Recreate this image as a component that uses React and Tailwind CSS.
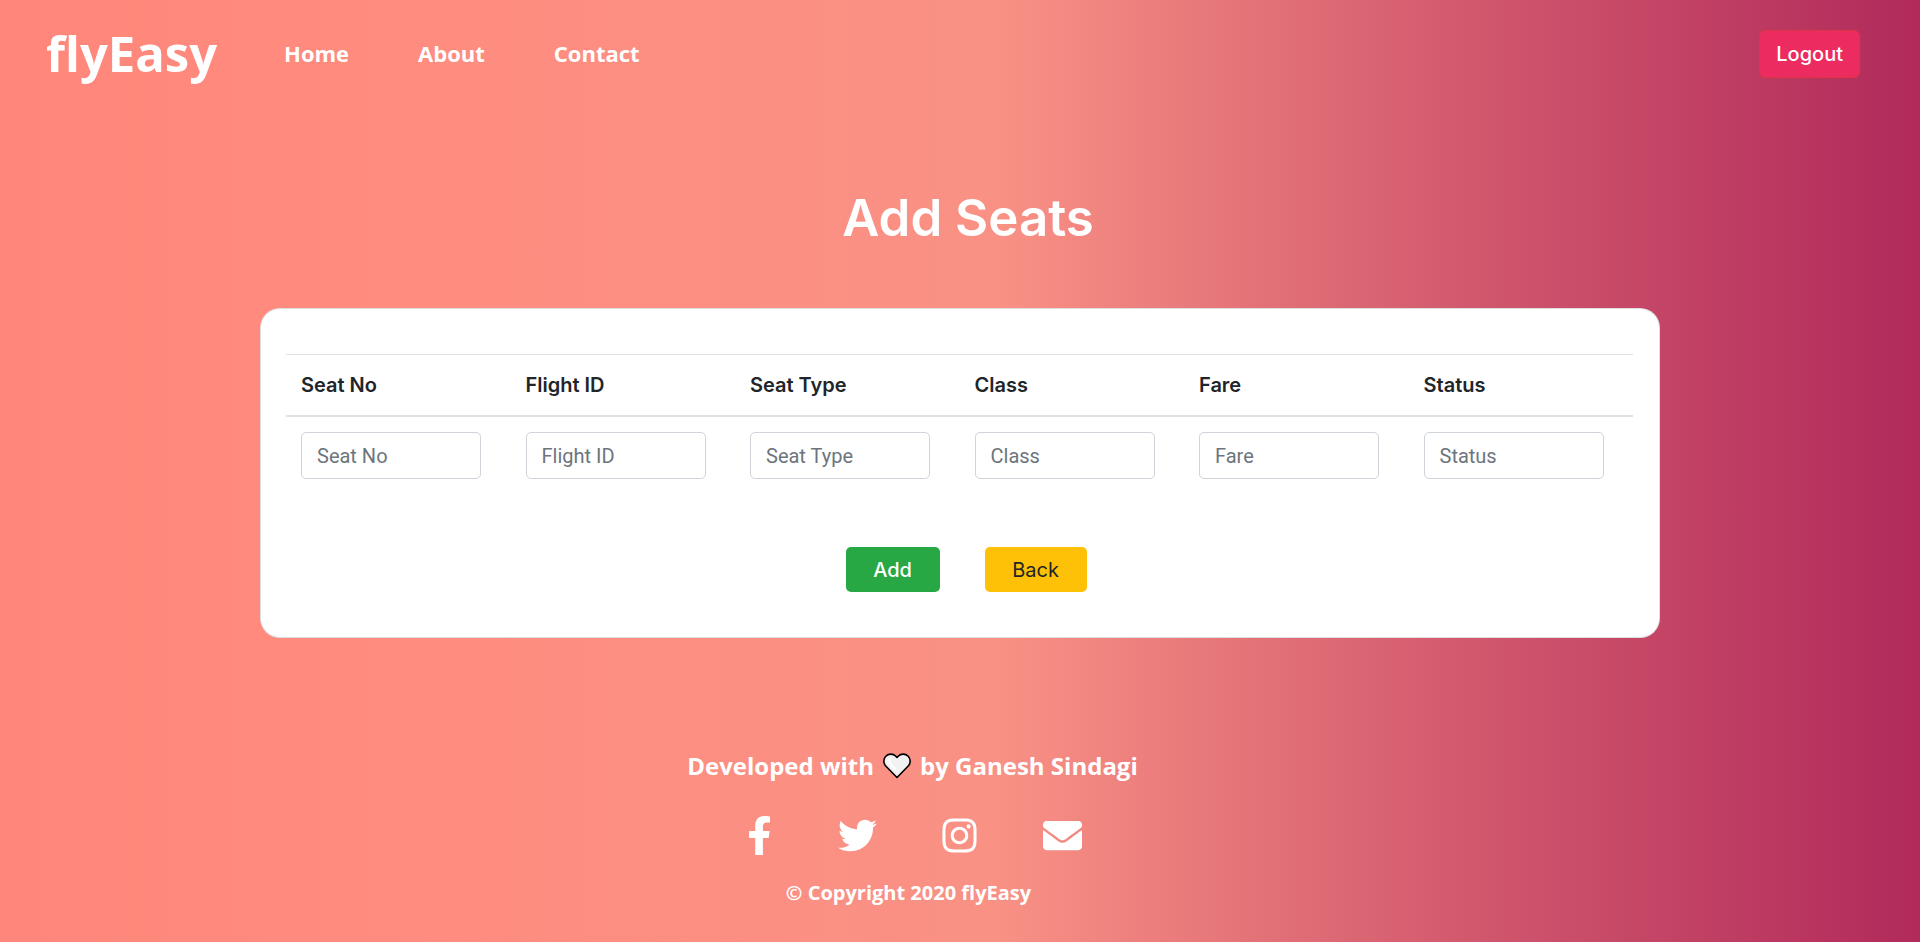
import { FaEnvelope, FaFacebookF, FaInstagram, FaTwitter } from "react-icons/fa";

const navLinks = ["Home", "About", "Contact"];

const fields = [
  { id: "seat-no", label: "Seat No" },
  { id: "flight-id", label: "Flight ID" },
  { id: "seat-type", label: "Seat Type" },
  { id: "class", label: "Class" },
  { id: "fare", label: "Fare" },
  { id: "status", label: "Status" },
];

const socials = [
  { name: "Facebook", Icon: FaFacebookF, width: "w-6" },
  { name: "Twitter", Icon: FaTwitter, width: "w-[39px]" },
  { name: "Instagram", Icon: FaInstagram, width: "w-[34px]" },
  { name: "Email", Icon: FaEnvelope, width: "w-[39px]" },
];

function Heart() {
  return (
    <svg viewBox="0 0 28 26" className="h-[26px] w-7" aria-hidden="true">
      <path
        d="M14 24.500 3 13.300C.2 10.400.1 6 2.800 3.200c2.800-2.800 7.300-2.800 10 0L14 4.400l1.200-1.200c2.700-2.800 7.200-2.800 10 0 2.700 2.800 2.600 7.200-.2 10.100Z"
        fill="#f2f2f2"
        stroke="#000"
        strokeWidth="1.600"
        strokeLinejoin="round"
      />
      <path d="M6.600 6.200c-.4 3.400 1.600 6.800 5.400 9.200" fill="none" stroke="#fff" strokeWidth="2.400" strokeLinecap="round" />
    </svg>
  );
}

function Header() {
  return (
    <header className="flex items-center py-6 pr-[60px] pl-[46px] font-['Open_Sans',sans-serif] font-bold text-white">
      <a href="#" className="pb-0.5 text-[49px] leading-[58px]">
        flyEasy
      </a>
      <nav className="ml-[67px] flex gap-[69px] pb-0.5 text-[22px] leading-8">
        {navLinks.map((link) => (
          <a key={link} href="#">
            {link}
          </a>
        ))}
      </nav>
      <button
        type="button"
        className="ml-auto h-12 rounded-md border border-[#dc3545] bg-[#ec2b61] px-4 font-['Inter',sans-serif] text-xl font-medium"
      >
        Logout
      </button>
    </header>
  );
}

function SeatForm() {
  return (
    <form
      className="mx-auto w-full max-w-[1400px] rounded-[20px] border border-black/[.125] bg-white pt-[45px] pr-[26px] pb-[45px] pl-[25px]"
      onSubmit={(event) => event.preventDefault()}
    >
      <table className="w-full table-fixed border-collapse text-left">
        <thead>
          <tr className="border-t border-b-2 border-t-[#dee2e6] border-b-[#dee2e6]">
            {fields.map(({ id, label }) => (
              <th key={id} scope="col" className="px-[15px] py-[15px] font-['Inter',sans-serif] text-xl leading-[30px] font-semibold text-[#212529]">
                <label htmlFor={id}>{label}</label>
              </th>
            ))}
          </tr>
        </thead>
        <tbody>
          <tr>
            {fields.map(({ id, label }) => (
              <td key={id} className="px-[15px] py-[15px]">
                <input
                  id={id}
                  type="text"
                  placeholder={label}
                  className="block h-[47px] w-full max-w-[180px] rounded-[5px] border border-[#ced4da] px-[15px] font-['Roboto',sans-serif] text-xl text-[#495057] placeholder:text-[#6c757d]"
                />
              </td>
            ))}
          </tr>
        </tbody>
      </table>
      <div className="mt-[53px] flex justify-center gap-[45px] pl-[13px] font-['Inter',sans-serif] text-xl">
        <button type="submit" className="h-[45px] w-[94px] rounded-[5px] bg-[#28a745] font-medium text-white">
          Add
        </button>
        <button type="button" className="h-[45px] w-[102px] rounded-[5px] bg-[#ffc107] text-[#212529]">
          Back
        </button>
      </div>
    </form>
  );
}

function Footer() {
  return (
    <footer className="mt-auto flex flex-col items-center pr-[95px] pb-[35px] font-['Open_Sans',sans-serif] font-bold text-white">
      <p className="flex items-center gap-[9px] text-2xl leading-9">
        Developed with <Heart /> by Ganesh Sindagi
      </p>
      <div className="mt-8 flex gap-[66px] pl-1">
        {socials.map(({ name, Icon, width }) => (
          <a key={name} href="#" aria-label={name} className={`flex justify-center ${width}`}>
            <Icon className="size-[39px] shrink-0" />
          </a>
        ))}
      </div>
      <p className="mt-6 pr-2 text-xl leading-7">© Copyright 2020 flyEasy</p>
    </footer>
  );
}

export default function App() {
  return (
    <div className="flex min-h-screen flex-col bg-[linear-gradient(to_right,#ff867a_0%,#ff8c7f_21%,#f99185_52%,#cf556c_78%,#b12a5b_100%)]">
      <Header />
      <main className="px-6 pt-[74px]">
        <h1 className="mb-[54px] pl-4 text-center font-['Inter',sans-serif] text-[51px] leading-[72px] font-semibold text-white">
          Add Seats
        </h1>
        <SeatForm />
      </main>
      <Footer />
    </div>
  );
}
